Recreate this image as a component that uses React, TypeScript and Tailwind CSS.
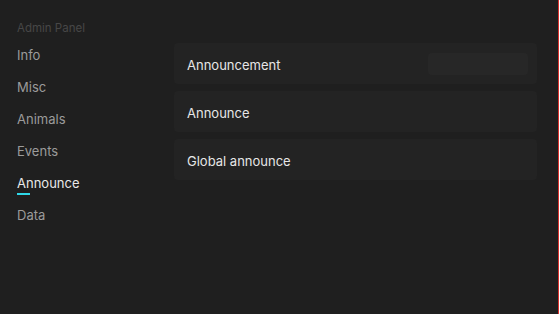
import React from "react";

const items = ["Info", "Misc", "Animals", "Events", "Announce", "Data"];
const rows = ["Announcement", "Announce", "Global announce"];

export default function App() {
  return (
    <div
      className="flex h-[314px] w-[559px] bg-[#1f1f1f] border-r border-[#d8322f]"
      style={{ fontFamily: "Inter, 'Noto Sans', sans-serif" }}
    >
      <div className="w-[174px] shrink-0 pl-[17px] pt-[21px]">
        <div className="text-[11.5px] leading-[14px] text-[#474747]">Admin Panel</div>
        <div className="mt-[12px] flex flex-col">
          {items.map((it) => {
            const active = it === "Announce";
            return (
              <div key={it} className="h-[32px] relative">
                <div
                  className={
                    "text-[13px] leading-[16px] " +
                    (active ? "text-[#e8e8e8]" : "text-[#9b9b9b]")
                  }
                >
                  {it}
                </div>
                {active && (
                  <div className="absolute left-0 top-[18px] h-[2px] w-[13px] bg-[#2fd8e8]" />
                )}
              </div>
            );
          })}
        </div>
      </div>
      <div className="flex-1 pt-[43px] pr-[21px] flex flex-col gap-[7px]">
        {rows.map((r, i) => (
          <div
            key={r}
            className="h-[41px] rounded-[4px] bg-[#232323] flex items-center justify-between pl-[13px] pr-[9px]"
          >
            <span className="pt-[4px] text-[13px] text-[#e6e6e6]">{r}</span>
            {i === 0 && <div className="h-[22px] w-[100px] rounded-[4px] bg-[#272727]" />}
          </div>
        ))}
      </div>
    </div>
  );
}
